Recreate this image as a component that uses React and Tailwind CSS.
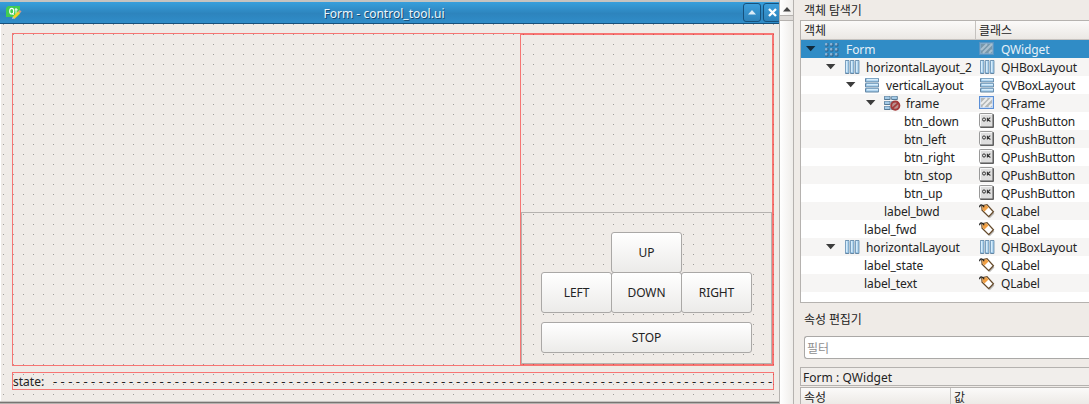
import React from "react";

function LayoutIcon({ vertical }) {
  return (
    <svg width="16" height="16" viewBox="0 0 16 16" className="shrink-0">
      <g transform={vertical ? "rotate(90 8 8)" : undefined}>
        {[1, 6, 11].map((x) => (
          <g key={x}>
            <rect x={x} y="1" width="4.4" height="14" rx="1" fill="#6385a3" />
            <rect x={x + 0.6} y="1.8" width="3" height="12.2" rx="0.5" fill="#9cc9ea" />
            <rect x={x + 1} y="2" width="1.4" height="11" fill="#d6ecfa" />
          </g>
        ))}
      </g>
    </svg>
  );
}

function FormIcon() {
  return (
    <svg width="16" height="16" viewBox="0 0 16 16" className="shrink-0">
      {[1, 6, 11].map((x) =>
        [2, 7, 12].map((y) => (
          <g key={`${x}-${y}`}>
            <rect x={x} y={y} width="3.4" height="3.4" rx="0.6" fill="#2f5f88" />
            <rect x={x} y={y} width="2.4" height="2.4" rx="0.5" fill="#86b3d6" />
          </g>
        ))
      )}
    </svg>
  );
}

function BrokenLayoutIcon() {
  return (
    <svg width="17" height="16" viewBox="0 0 17 16" className="shrink-0">
      {[1, 6, 11].map((y) => (
        <g key={y}>
          {[0, 7.2].map((x) => (
            <g key={x}>
              <rect x={x} y={y} width="6.6" height="4" rx="0.8" fill="#567995" />
              <rect x={x + 0.7} y={y + 0.5} width="5" height="2.4" rx="0.4" fill="#a4cae6" />
            </g>
          ))}
        </g>
      ))}
      <circle cx="11.3" cy="10.6" r="4.1" fill="#b9908f" stroke="#a33a3a" strokeWidth="1.9" />
      <path d="M8.3 13.3l6-5.4" stroke="#a33a3a" strokeWidth="1.8" />
    </svg>
  );
}

function WidgetIcon({ selected }) {
  return (
    <svg width="16" height="16" viewBox="0 0 16 16" className="shrink-0">
      <rect x="0.5" y="1.5" width="14" height="12" fill={selected ? "#7fa9c8" : "#c3d8f4"} stroke={selected ? "#5a94c2" : "#5b8fd6"} />
      <rect x="2" y="3" width="11" height="9" fill={selected ? "#7797ab" : "#b4b8b8"} />
      <path d="M2 9l6-6M4 12l9-9M10 12l3-3" stroke={selected ? "#a9c0cf" : "#eceded"} strokeWidth="2" />
    </svg>
  );
}

function ButtonIcon() {
  return (
    <svg width="16" height="16" viewBox="0 0 16 16" className="shrink-0">
      <rect x="1" y="1" width="14" height="14" rx="1" fill="#5f5f5f" />
      <rect x="0.5" y="0.5" width="13" height="13" rx="0.8" fill="#dedede" stroke="#999" />
      <path d="M1.5 13V1.5H13" fill="none" stroke="#f7f7f7" />
      <ellipse cx="5" cy="6.5" rx="1.5" ry="1.6" fill="none" stroke="#333" strokeWidth="1" />
      <path d="M8.4 4.7v3.8M11.3 4.7L9 6.6l2.4 1.9" fill="none" stroke="#333" strokeWidth="1.1" />
    </svg>
  );
}

function LabelIcon() {
  return (
    <svg width="16" height="16" viewBox="0 0 16 16" className="shrink-0">
      <path d="M4 4l5.2-.7 6.2 7.2-4.6 4.8-6.8-6.5z" fill="#8d8a86" opacity=".6" />
      <path d="M2.8 2.8L8 1.6l6.4 7.2-4.7 4.8-6.6-6.3z" fill="#fff" stroke="#664b2c" strokeWidth="1.3" />
      <path d="M3.4 3.3l4.2-1 2 2.3-4.2 4-1.8-1.8z" fill="#f1a044" />
      <path d="M5.2 4.3C3.5 1 .8 .9 .6 4.3" fill="none" stroke="#222" strokeWidth="1.2" />
    </svg>
  );
}

const ICONS = {
  form: <FormIcon />,
  hbox: <LayoutIcon />,
  vbox: <LayoutIcon vertical />,
  broken: <BrokenLayoutIcon />,
  widget: <WidgetIcon selected />,
  frame: <WidgetIcon />,
  button: <ButtonIcon />,
  label: <LabelIcon />,
};

const ROWS = [
  { pad: "pl-1", icon: "form", name: "Form", cls: "QWidget", cicon: "widget", selected: true },
  { pad: "pl-6", icon: "hbox", name: "horizontalLayout_2", cls: "QHBoxLayout", cicon: "hbox" },
  { pad: "pl-11", icon: "vbox", name: "verticalLayout", cls: "QVBoxLayout", cicon: "vbox" },
  { pad: "pl-16", icon: "broken", name: "frame", cls: "QFrame", cicon: "frame" },
  { pad: "pl-[103px]", name: "btn_down", cls: "QPushButton", cicon: "button" },
  { pad: "pl-[103px]", name: "btn_left", cls: "QPushButton", cicon: "button" },
  { pad: "pl-[103px]", name: "btn_right", cls: "QPushButton", cicon: "button" },
  { pad: "pl-[103px]", name: "btn_stop", cls: "QPushButton", cicon: "button" },
  { pad: "pl-[103px]", name: "btn_up", cls: "QPushButton", cicon: "button" },
  { pad: "pl-[83px]", name: "label_bwd", cls: "QLabel", cicon: "label" },
  { pad: "pl-[63px]", name: "label_fwd", cls: "QLabel", cicon: "label" },
  { pad: "pl-6", icon: "hbox", name: "horizontalLayout", cls: "QHBoxLayout", cicon: "hbox" },
  { pad: "pl-[63px]", name: "label_state", cls: "QLabel", cicon: "label" },
  { pad: "pl-[63px]", name: "label_text", cls: "QLabel", cicon: "label" },
];

function TreeRow({ row }) {
  const tone = row.selected ? "bg-[#308cc6] text-[#e6f0f7]" : "text-[#232323] even:bg-[#f6f5f4]";
  return (
    <div className={`flex h-[18px] items-center leading-[16px] ${tone}`}>
      <div className={`flex w-[178px] shrink-0 items-center ${row.pad}`}>
        {row.icon && (
          <>
            <svg width="11" height="18" viewBox="0 0 11 18" className="mr-[8px] shrink-0">
              <path d="M1 6h9.4L5.7 11.3z" fill={row.selected ? "#12293a" : "#3c3c3c"} />
            </svg>
            <span className="mr-[6px] flex w-4 shrink-0">{ICONS[row.icon]}</span>
          </>
        )}
        <span className="pt-[2px] whitespace-pre">{row.name}</span>
      </div>
      {ICONS[row.cicon]}
      <span className="ml-1.5 pt-[2px] tracking-[-0.15px]">{row.cls}</span>
    </div>
  );
}

function PushButton({ children, className }) {
  return (
    <div className={`flex items-center justify-center rounded-[3px] border border-[#aaa8a6] bg-linear-to-b from-white to-[#ecebe9] pt-px ${className}`}>
      {children}
    </div>
  );
}

function TitleButton({ children }) {
  return (
    <div className="flex h-[19px] w-[18px] shrink-0 items-center justify-center rounded-[3px] border border-[#17517c] bg-linear-to-b from-[#3c9edb] to-[#2d82ba]">
      {children}
    </div>
  );
}

function FormWindow() {
  return (
    <div className="flex w-[780px] shrink-0 flex-col overflow-hidden border-r border-[#b5b2af]">
      <div className="flex h-6 shrink-0 items-center overflow-hidden border-t-2 border-b border-t-[#c5c3c0] border-b-[#17517c] bg-linear-to-b from-[#379fdc] from-0% via-[#2d84bd] via-55% to-[#308dc9]">
        <svg width="17" height="14" viewBox="0 0 17 14" className="ml-[6px] shrink-0">
          <path d="M2 0h12v8l-3 3H0V2z" fill="#41cd52" />
          <ellipse cx="5.7" cy="5.2" rx="2" ry="2.8" fill="none" stroke="#fff" strokeWidth="1.1" />
          <path d="M6 7l1.6 2M10 2v5.3q0 1 1 .8M8.7 3.8h3" fill="none" stroke="#fff" strokeWidth="1" />
          <path d="M7.5 12l5.8-6" stroke="#f5d029" strokeWidth="2.6" />
          <path d="M13 6.3l1.6-1.7" stroke="#c99a8f" strokeWidth="2.6" />
          <path d="M6 13l.8-2.2 1.7 1.4z" fill="#c3d3df" />
        </svg>
        <div className="flex-1 pt-[2px] pl-[2px] text-center tracking-[0.02px] text-[#eef6fb] [text-shadow:1px_1px_0_#174a70]">Form - control_tool.ui</div>
        <div className="flex w-[36px] shrink-0 gap-[2px] overflow-hidden">
          <TitleButton>
            <svg width="8" height="5" viewBox="0 0 8 5">
              <path d="M0 4.5L4 0l4 4.5z" fill="#dcecf7" />
            </svg>
          </TitleButton>
          <TitleButton>
            <svg width="9" height="9" viewBox="0 0 9 9">
              <path d="M1 1l7 7M8 1L1 8" stroke="#fff" strokeWidth="2.3" />
            </svg>
          </TitleButton>
        </div>
      </div>
      <div className="flex h-[377px] shrink-0 flex-col border-l border-white bg-[#efebe7] bg-[conic-gradient(at_1px_1px,transparent_75%,#a09e9b_0)] [background-size:10px_10px] [background-position:2px_0px] pt-[9px] pl-[11px]">
        <div className="flex h-[333px] w-[762px] shrink-0 justify-end border border-[#ff000080]">
          <div className="flex w-[253px] flex-col justify-end border border-[#ff000080]">
            <div className="flex h-[152px] flex-col border border-[#b5b2af] pt-[19px] pl-[19px]">
              <PushButton className="ml-[70px] h-[41px] w-[71px]">UP</PushButton>
              <div className="-mt-px flex">
                <PushButton className="h-[41px] w-[71px]">LEFT</PushButton>
                <PushButton className="-ml-px h-[41px] w-[71px]">DOWN</PushButton>
                <PushButton className="-ml-px h-[41px] w-[71px]">RIGHT</PushButton>
              </div>
              <PushButton className="mt-[9px] h-[31px] w-[211px]">STOP</PushButton>
            </div>
          </div>
        </div>
        <div className="mt-[6px] flex h-[18px] w-[762px] shrink-0 items-center border border-[#ff000080]">
          <span className="w-[40px] shrink-0 pt-[2px] tracking-[0.02px]">state:</span>
          <span className="text-[13px] tracking-[0.02px] whitespace-pre">{"- ".repeat(94) + "-"}</span>
        </div>
      </div>
      <div className="h-[3px] shrink-0 border-t border-b border-t-[#c5c3c0] border-b-[#b5b2af] bg-[#777572]" />
    </div>
  );
}

function ScrollBar() {
  return (
    <div className="flex w-[14px] shrink-0 flex-col border-r border-[#b5b2af] bg-linear-to-r from-white to-[#efedea]">
      <div className="flex h-4 items-center justify-center border-b border-[#b5b2af] pt-[3px]">
        <svg width="8" height="5" viewBox="0 0 8 5">
          <path d="M0 4.5L4 0l4 4.5z" fill="#444" />
        </svg>
      </div>
      <div className="h-[5px] border-b border-[#b5b2af] bg-[#dedbd8]" />
    </div>
  );
}

function HeaderCell({ children, className }) {
  return <div className={`shrink-0 pl-[3px] leading-[20px] ${className}`}>{children}</div>;
}

export default function App() {
  return (
    <div className="flex h-[404px] w-[1089px] overflow-hidden bg-[#efebe7] font-['Noto_Sans','Noto_Sans_CJK_KR',sans-serif] text-[12px] leading-[16px] tracking-[-0.1px] text-[#232323]">
      <FormWindow />
      <ScrollBar />
      <div className="flex w-[295px] shrink-0 flex-col overflow-hidden pl-[6px]">
        <div className="h-5 shrink-0 pl-1 leading-[22px]">객체 탐색기</div>
        <div className="h-[283px] shrink-0 border border-r-0 border-[#b5b2af] bg-white">
          <div className="flex h-[19px] border-b border-[#c5c2bf] bg-linear-to-b from-[#fbfaf9] to-[#ebe8e4]">
            <HeaderCell className="w-[175px] border-r border-[#c5c2bf]">객체</HeaderCell>
            <HeaderCell className="w-[114px]">클래스</HeaderCell>
          </div>
          <div>
            {ROWS.map((row) => (
              <TreeRow key={row.name} row={row} />
            ))}
          </div>
        </div>
        <div className="h-[33px] shrink-0 pl-1 leading-[33px]">속성 편집기</div>
        <div className="ml-1 h-[23px] shrink-0 rounded-l-[3px] border border-r-0 border-[#aaa8a6] bg-white pl-[2px] leading-[23px] text-[#8f8f8f]">필터</div>
        <div className="mt-2 h-[19px] shrink-0 border border-r-0 border-[#b5b2af] bg-[#f1eeeb] pl-[2px] leading-[19px] tracking-[0.05px]">Form : QWidget</div>
        <div className="mt-px flex h-[19px] shrink-0 border-t border-l border-[#b5b2af] bg-linear-to-b from-[#fbfaf9] to-[#ebe8e4]">
          <HeaderCell className="w-[150px] border-r border-[#c5c2bf]">속성</HeaderCell>
          <HeaderCell className="w-[139px]">값</HeaderCell>
        </div>
      </div>
    </div>
  );
}
